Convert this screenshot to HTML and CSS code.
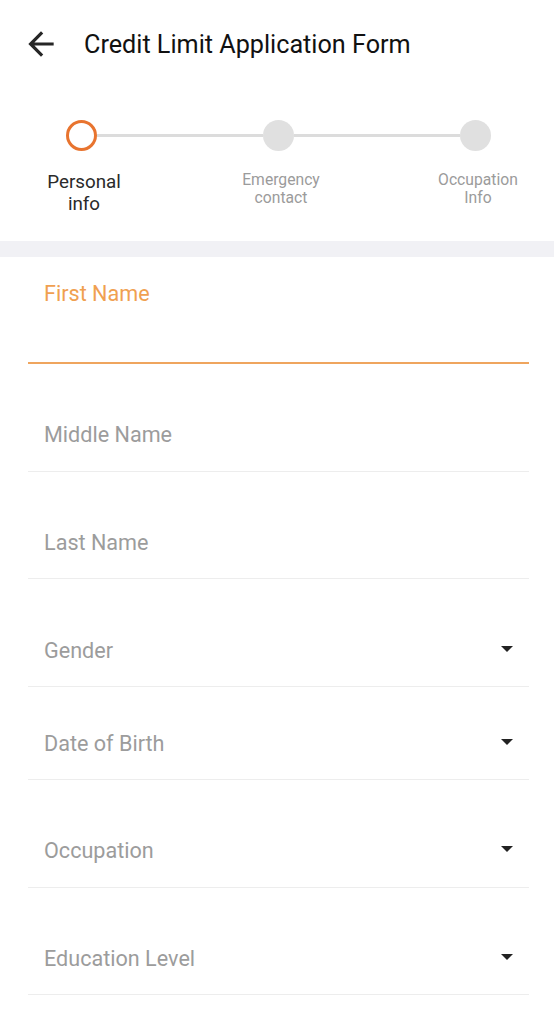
FILE: index.html
```html
<!DOCTYPE html>
<html lang="en">
<head>
<meta charset="utf-8">
<title>Credit Limit Application Form</title>
<link rel="stylesheet" href="styles.css">
</head>
<body>
<div class="app">
  <header class="topbar">
    <svg class="back" viewBox="0 0 24 24" aria-hidden="true"><path d="M20 11H7.83l5.59-5.59L12 4l-8 8 8 8 1.41-1.41L7.83 13H20v-2z"/></svg>
    <h1 class="title">Credit Limit Application Form</h1>
  </header>

  <section class="stepper">
    <div class="track">
      <span class="dot dot-active"></span>
      <span class="bar"></span>
      <span class="dot"></span>
      <span class="bar"></span>
      <span class="dot"></span>
    </div>
    <div class="labels">
      <span class="label label-active">Personal<br>info</span>
      <span class="label">Emergency<br>contact</span>
      <span class="label">Occupation<br>Info</span>
    </div>
  </section>

  <div class="band"></div>

  <form class="form">
    <div class="field field-focus">
      <span class="float">First Name</span>
    </div>
    <div class="field"><span class="ph">Middle Name</span></div>
    <div class="field"><span class="ph">Last Name</span></div>
    <div class="field field-select"><span class="ph">Gender</span><svg class="caret" viewBox="0 0 12 6"><path d="M0 0h12L6 6z"/></svg></div>
    <div class="field field-select field-short"><span class="ph">Date of Birth</span><svg class="caret" viewBox="0 0 12 6"><path d="M0 0h12L6 6z"/></svg></div>
    <div class="field field-select"><span class="ph">Occupation</span><svg class="caret" viewBox="0 0 12 6"><path d="M0 0h12L6 6z"/></svg></div>
    <div class="field field-select"><span class="ph">Education Level</span><svg class="caret" viewBox="0 0 12 6"><path d="M0 0h12L6 6z"/></svg></div>
  </form>
</div>
</body>
</html>
```

FILE: styles.css
```css
* { box-sizing: border-box; }
html, body { margin: 0; padding: 0; background: #fff; }
body { font-family: Roboto, "Noto Sans", Arial, sans-serif; color: #1a1a1a; }
.app { width: 554px; }

.topbar {
  height: 88px;
  display: flex;
  align-items: center;
  padding-left: 22px;
}
.back { width: 38px; height: 38px; fill: #262626; flex: none; }
.title {
  margin: 0 0 0 24px;
  font-size: 25.2px;
  font-weight: 400;
  color: #111;
  letter-spacing: 0;
}

.stepper { padding-top: 32px; height: 153px; }
.track {
  display: flex;
  align-items: center;
  padding: 0 63px 0 66px;
}
.dot {
  width: 31px; height: 31px;
  border-radius: 50%;
  background: #e0e0e0;
  flex: none;
}
.dot-active {
  background: #fff;
  border: 3px solid #e8742f;
}
.bar { flex: 1; height: 3px; background: #dcdcdc; }

.labels {
  display: grid;
  grid-template-columns: 120px 120px 120px;
  justify-content: space-between;
  padding: 0 16px 0 24px;
  margin-top: 20px;
}
.label {
  text-align: center;
  font-size: 15.7px;
  line-height: 18px;
  color: #9b9b9b;
}
.label-active {
  font-size: 18.8px;
  line-height: 22px;
  color: #2a2a2a;
}

.band { height: 16px; background: #f1f1f5; }

.form { padding: 0 25px 0 28px; margin: 0; }
.field {
  display: flex;
  align-items: center;
  padding: 59px 16px 23px;
  border-bottom: 1px solid #ededed;
  height: 107.7px;
}
.field-short { height: 93px; padding-top: 45px; padding-bottom: 23px; }
.field-focus {
  height: 107px;
  align-items: flex-start;
  padding-top: 25px;
  border-bottom: 2px solid #efa55e;
}
.float { font-size: 21.6px; line-height: 24px; color: #f0a050; }
.ph { font-size: 21.6px; line-height: 24px; color: #9c9c9c; flex: 1; }
.caret { width: 12px; height: 6px; fill: #222; margin-top: -4px; margin-right: 0; }
```
